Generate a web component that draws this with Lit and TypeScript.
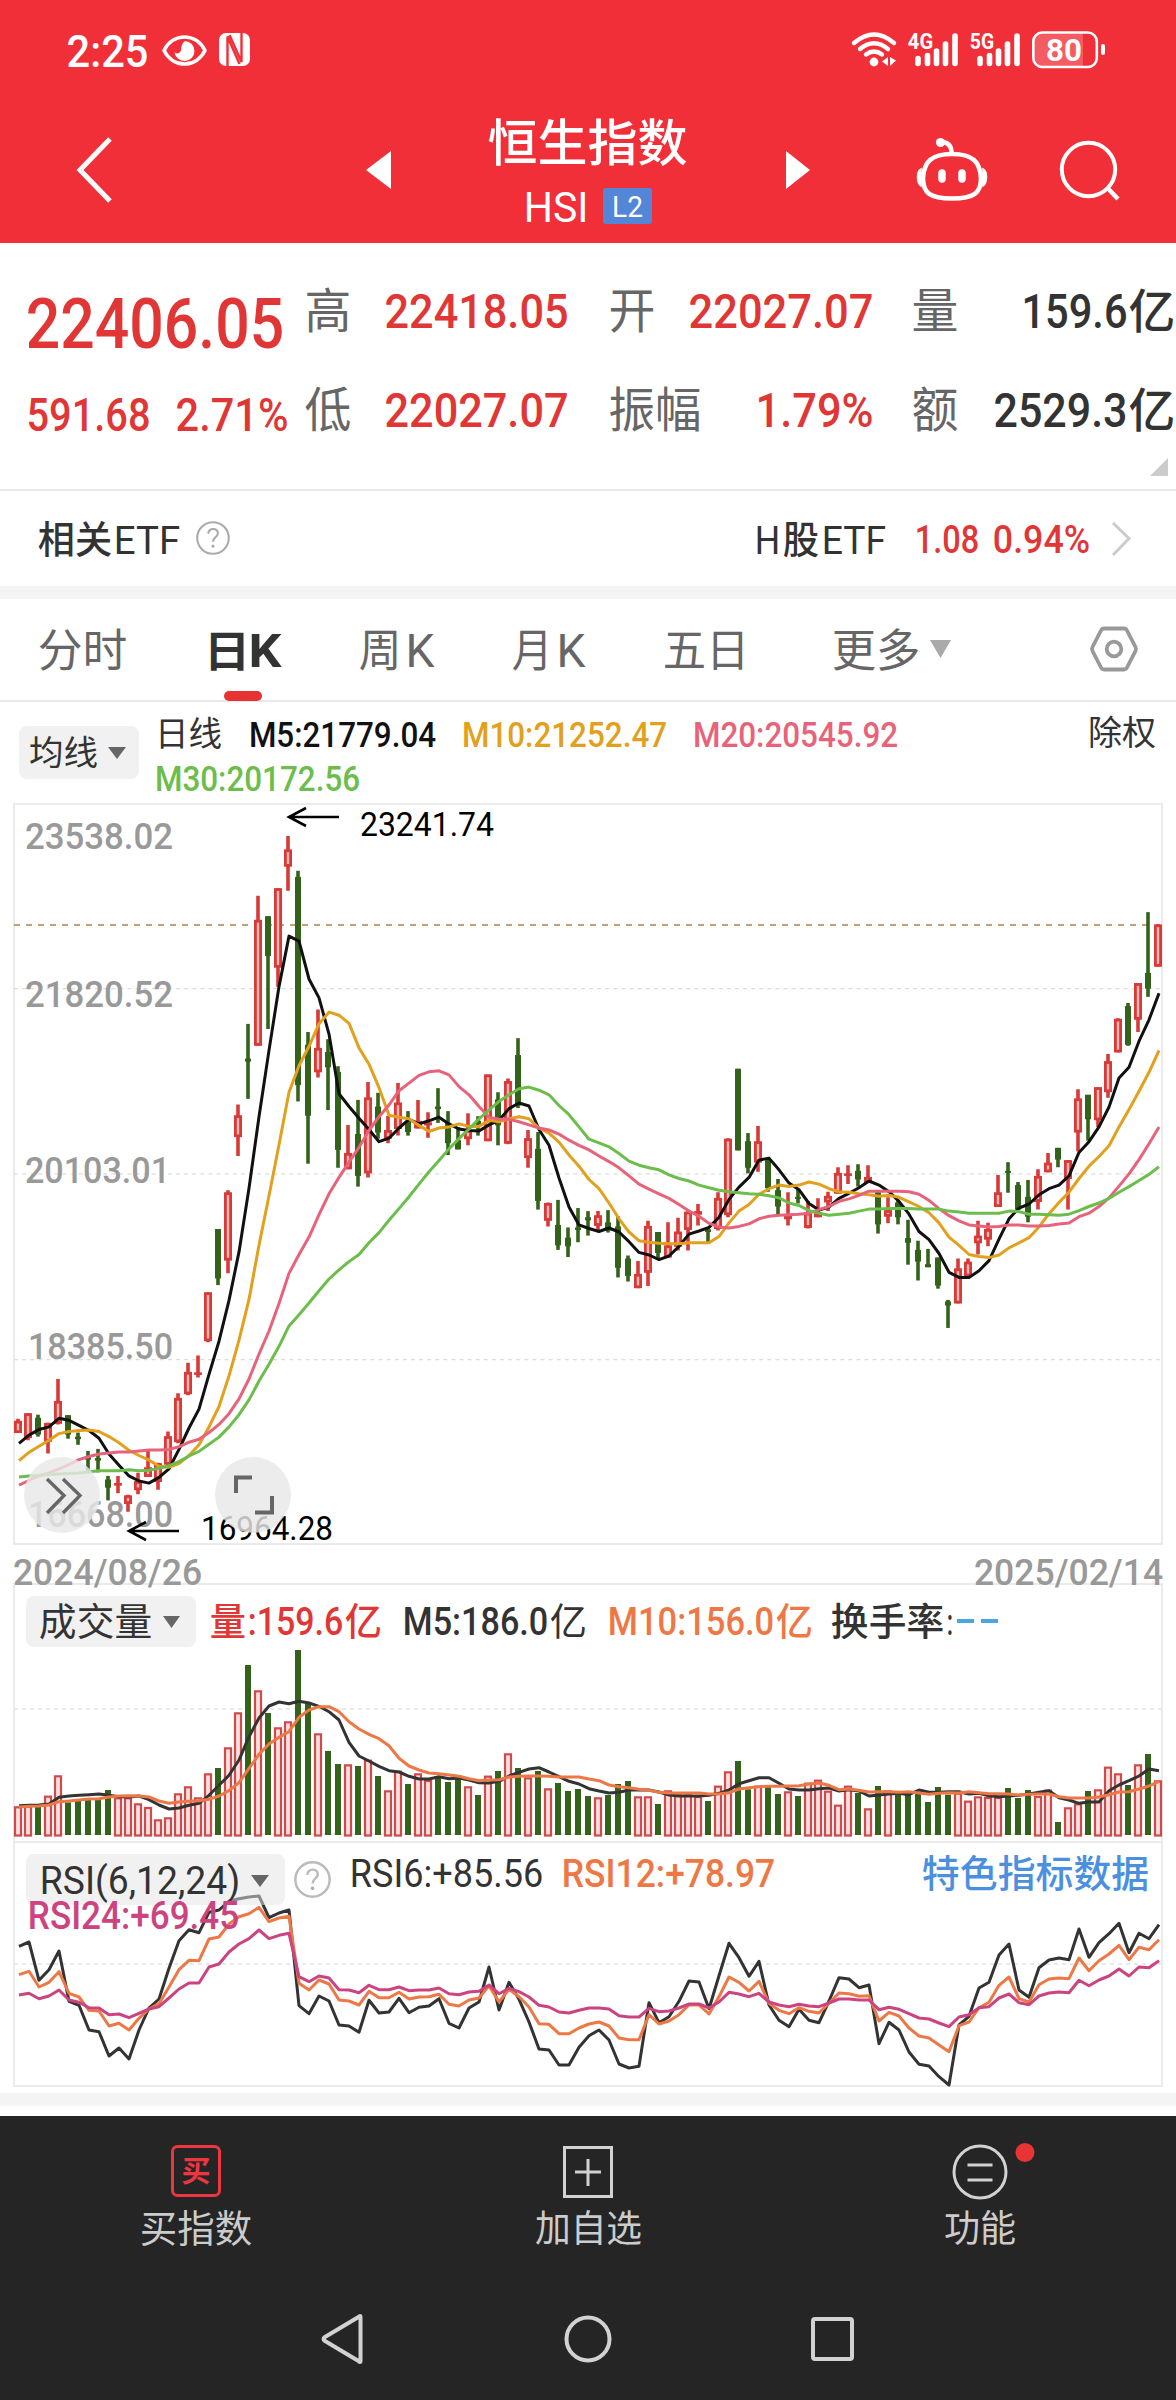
import { LitElement, html, svg, css } from "lit";
import { customElement } from "lit/decorators.js";

const CAP = 0.711;

/* One run of text fitted to an exact ink width; the box is the cap height, so its bottom edge is the baseline. */
const run = (text: string, w: number, size: number, bearing: number, cls: string) => {
  const cap = size * CAP;
  const pad = size * bearing;
  return html`<svg class="run ${cls}" width=${w} height=${cap} font-size=${size}>
    <text x=${-pad} y=${cap} textLength=${w + pad * 2} lengthAdjust="spacingAndGlyphs">${text}</text>
  </svg>`;
};
const num = (text: string, w: number, cap: number, cls = "") => run(text, w, cap / CAP, 0.032, cls);
const cjk = (text: string, w: number, size: number, cls = "") => run(text, w, size, 0.03, cls);

/* Same fitting for labels that live inside a chart. */
const label = (text: string, x: number, y: number, w: number, cap: number, cls: string) => {
  const size = cap / CAP;
  const pad = size * 0.03;
  return svg`<text class=${cls} font-size=${size} x=${x - pad} y=${y} textLength=${w + pad * 2} lengthAdjust="spacingAndGlyphs">${text}</text>`;
};

const caret = (w: number, h: number, cls: string) =>
  html`<svg class="caret ${cls}" width=${w} height=${h} viewBox="0 0 10 10" preserveAspectRatio="none"><path d="M0 0H10L5 10Z" /></svg>`;

const question = (r: number) => html`<svg class="q" width=${r * 2} height=${r * 2} viewBox="-18 -18 36 36">
  <circle r="16.7" /><path d="M-5 -4.5C-5 -11.5 5.5 -11 5.2 -4.8C5 -1 0 -1 0 4" /><circle class="dot" cy="8.6" r="1.7" /></svg>`;

/* color high top bottom low, in half-pixel ticks */
const CANDLES = `r1252 1256 1280 1280|r1241 1241 1290 1294|g1244 1250 1283 1287|r1260 1260 1297 1320|r1174 1217 1262 1263|g1245 1245 1283 1291|g1279 1287 1292 1303|g1315 1328 1332 1355|g1311 1329 1334 1357|g1364 1371 1387 1412|r1364 1378 1383 1398|r1401 1402 1419 1434|r1358 1374 1392 1400|r1314 1347 1366 1366|r1338 1339 1376 1391|r1277 1286 1342 1345|r1202 1211 1298 1300|r1142 1160 1204 1206|r1128 1161 1166 1171|r1004 1004 1100 1102|g880 880 977 990|r804 808 942 967|r636 657 700 737|g478 546 552 625|r227 274 521 521|g267 267 345 488|r212 212 368 405|r110 136 170 217|g178 190 598 630|g494 519 658 752|r450 525 573 583|g508 533 563 647|g561 572 725 760|r676 731 763 763|g627 694 776 797|r592 622 771 779|g613 640 691 703|r658 686 703 712|r594 632 684 697|g649 670 690 697|r627 668 683 683|r651 671 677 701|g604 640 645 672|g649 672 712 735|g680 706 724 724|r653 686 704 716|g659 668 675 697|r577 577 708 708|g612 626 677 716|r585 590 713 714|g506 539 638 643|r686 702 741 760|g690 723 825 842|r828 829 864 875|g823 872 912 921|g877 897 914 935|g839 877 882 906|g845 857 863 893|r845 853 874 882|g843 867 883 887|g855 875 956 975|g932 938 972 983|r943 968 996 996|r864 874 966 992|g886 886 927 938|r867 912 936 937|r858 885 915 922|r845 846 882 922|r831 845 852 873|g877 881 886 906|r808 819 880 883|r702 703 853 857|g566 566 726 726|g692 708 760 771|r678 708 750 768|g740 745 800 807|g782 804 836 851|r808 854 861 873|g802 817 821 830|r825 848 878 879|r820 847 857 857|r807 815 828 845|r759 770 811 811|r755 771 776 792|g753 766 783 797|r755 778 790 790|g808 808 871 889|r818 843 856 869|g824 828 857 871|g862 898 907 950|g903 921 944 981|g919 949 955 955|g936 936 991 997|g1019 1022 1030 1074|r938 957 1026 1026|r938 944 973 973|r864 893 908 930|r868 880 901 914|r774 808 837 837|g749 766 770 809|g788 794 842 842|g784 817 856 867|r763 776 827 842|r731 750 769 769|g721 721 744 759|r745 745 782 842|r606 624 691 728|g617 617 665 707|r602 602 667 680|r537 551 612 623|r467 468 534 534|g437 443 519 521|r398 398 470 494|g259 378 409 425|r282 283 366 366`
  .split("|")
  .map((c) => ({ up: c[0] === "r", v: c.slice(1).split(" ").map(Number) }));

const MA5 = [1300,1284,1273,1268,1251,1255,1265,1275,1290,1321,1343,1364,1374,1378,1367,1350,1312,1270,1233,1165,1100,1020,925,800,660,530,405,306,316,390,427,498,615,640,663,685,709,702,682,665,674,668,661,674,684,687,688,676,667,644,633,639,685,716,780,837,872,879,885,878,886,905,926,931,940,933,914,890,884,877,857,822,798,779,745,741,764,790,803,830,843,837,820,810,799,786,794,807,826,851,885,901,928,965,975,975,962,942,900,860,839,831,813,801,794,776,730,709,680,641,584,563,512,470,418];
const MA10 = [1334,1318,1306,1294,1281,1277,1275,1274,1277,1287,1299,1314,1324,1333,1345,1347,1340,1324,1303,1268,1228,1168,1098,1018,912,815,715,612,560,522,478,455,461,477,525,557,603,657,661,664,677,689,682,680,674,679,679,667,670,664,660,664,682,692,710,735,757,783,801,829,860,886,903,906,908,909,909,907,907,907,895,868,845,832,812,801,794,797,794,788,792,801,807,808,811,813,816,814,818,827,836,848,868,896,912,930,934,936,931,917,907,897,876,850,828,808,781,757,738,717,680,646,610,573,530];
const MA20 = [1382,1373,1364,1358,1350,1342,1332,1326,1321,1319,1317,1317,1315,1313,1313,1312,1307,1298,1292,1279,1263,1242,1213,1174,1125,1080,1026,967,930,896,852,811,779,749,720,687,660,637,609,594,579,572,570,578,601,617,640,661,665,665,670,676,682,686,694,706,716,725,737,748,760,776,792,802,811,820,832,845,855,869,876,878,875,870,860,855,853,852,851,849,842,836,826,821,814,806,806,806,806,807,812,824,840,854,864,872,874,876,875,872,872,874,874,873,870,868,856,849,836,819,796,772,744,713,680];
const MA30 = [1366,1364,1363,1361,1360,1359,1358,1356,1354,1354,1354,1352,1354,1353,1349,1344,1336,1325,1316,1302,1288,1268,1244,1215,1178,1145,1110,1070,1048,1025,1001,978,960,944,930,907,887,863,840,817,792,768,746,723,703,684,664,647,630,617,605,602,608,617,638,656,680,704,711,719,732,747,755,760,764,774,781,786,794,799,804,807,809,811,812,815,819,829,834,844,849,853,851,849,845,841,841,840,840,840,841,841,841,845,847,849,849,849,849,845,846,851,851,852,853,851,844,836,829,820,808,797,785,773,758];

const VOL = [799,797,800,767,706,787,780,777,777,750,772,772,790,801,838,832,760,739,772,700,684,622,517,375,451,519,562,544,330,492,580,633,672,673,678,659,708,751,692,732,700,720,708,726,717,739,765,707,693,640,684,712,693,745,729,753,747,768,772,765,732,723,769,769,792,751,762,762,768,783,737,694,663,748,737,740,762,754,768,728,719,752,794,737,759,805,738,751,764,764,762,786,741,764,758,782,769,771,771,744,774,750,768,749,846,802,790,753,748,680,700,735,673,642,721];
const VOL5 = [797,796,795,792,772,768,766,764,762,766,770,771,768,779,795,807,804,796,790,766,736,706,660,590,534,498,486,491,484,489,499,515,540,607,648,663,679,692,696,709,717,717,710,716,714,720,728,729,724,708,697,687,683,696,710,724,732,746,753,759,757,750,749,750,756,765,768,768,768,766,760,750,731,722,713,713,730,747,750,750,746,744,753,749,753,768,765,762,760,764,750,757,757,755,755,762,760,767,770,768,766,762,757,752,773,780,790,786,786,752,735,722,708,687,692];
const VOL10 = [801,799,798,795,785,783,780,777,776,771,768,767,768,771,783,790,786,784,782,778,768,752,728,685,643,612,592,575,532,510,500,500,515,545,567,583,596,617,655,678,690,699,701,705,709,716,722,720,719,711,709,708,708,709,711,711,711,717,722,735,740,743,748,751,757,759,759,759,759,762,762,758,747,743,740,739,739,738,737,732,729,736,749,747,751,756,755,755,757,755,759,763,760,758,759,755,758,761,761,762,765,763,762,762,770,774,774,774,771,764,756,755,747,738,724];

const RSI6 = [349,336,451,419,363,514,526,600,605,678,654,687,600,534,507,415,332,299,308,247,240,213,206,201,198,263,249,240,527,551,498,513,585,588,607,511,549,546,505,548,532,528,506,580,594,534,516,411,540,457,508,576,657,660,705,705,652,617,600,630,702,714,709,518,578,560,514,453,456,536,437,340,383,439,394,525,571,590,538,571,578,513,443,447,473,465,641,577,600,666,703,708,740,765,585,559,474,457,375,342,480,502,413,390,384,389,297,382,338,311,280,368,310,326,284];
const RSI12 = [434,424,471,457,425,490,501,541,543,588,580,600,565,537,521,471,419,391,392,327,321,282,260,251,232,275,264,259,460,480,450,462,510,513,525,484,503,503,487,507,501,500,493,523,528,510,504,467,516,478,500,531,581,583,611,611,594,582,576,588,624,629,629,554,582,573,554,525,525,552,500,441,457,483,454,520,541,551,533,544,549,519,489,491,499,497,573,547,558,594,618,624,645,665,587,576,533,517,466,441,506,516,464,447,444,446,384,422,392,372,346,389,352,359,329];
const RSI24 = [495,490,506,498,480,510,517,533,534,554,552,563,550,537,530,504,477,459,459,411,402,366,342,326,300,326,316,310,440,455,438,444,479,480,488,466,479,479,471,482,480,480,474,491,494,486,484,465,491,475,485,501,526,531,546,549,541,534,534,537,557,561,561,535,545,543,534,522,522,534,516,487,492,500,490,516,525,530,523,528,530,519,507,507,510,510,539,532,538,551,564,567,579,590,561,554,533,530,504,492,518,524,498,489,486,488,451,467,450,438,417,438,411,413,392];

const px = (i: number) => 18 + i * 10;
const py = (v: number) => 780 + v / 1.96;
const vy = (v: number) => 1540 + v / 3;
const ry = (v: number) => 1830 + v / 3;
const line = (data: number[], y: (v: number) => number, cls: string) =>
  svg`<polyline class="ln ${cls}" points=${data.map((v, i) => `${px(i) + 1},${y(v).toFixed(1)}`).join(" ")} />`;

@customElement("app-root")
export class AppRoot extends LitElement {
  static styles = css`
    :host {
      display: block;
      width: 1176px;
      height: 2400px;
      overflow: hidden;
      background: #fff;
      color: #333;
      font-family: Roboto, "Noto Sans CJK SC", sans-serif;
    }
    svg { display: block; overflow: visible; flex: none; }
    text { fill: currentColor; white-space: pre; }
    .m { font-weight: 500; }
    .b { font-weight: 700; }
    .flex { display: flex; align-items: flex-end; }
    .red { color: #e03636; }
    .gray { color: #666; }
    .light { color: #999; }
    .black { color: #111; }
    .gold { color: #e2a01c; }
    .pink { color: #e8637a; }
    .green { color: #6cbd4c; }
    .orange { color: #ee7845; }
    .magenta { color: #cb4480; }
    .blue { color: #4b90de; }
    .sky { color: #4aa6e2; }
    .caret { fill: #666; }
    .q { fill: none; stroke: #aaa; stroke-width: 2.2; }
    .q .dot { fill: #aaa; stroke: none; }

    .header { height: 243px; background: #f12f38; color: #fff; }
    .status { display: grid; grid-template-columns: 94px 57px 631px auto; align-items: end; height: 66px; padding-left: 68px; }
    .bar { display: grid; grid-template-columns: 290px 123px 197px 124px 177px 132px; align-items: center; box-sizing: border-box; height: 177px; padding: 31px 0 0 76px; }
    .name { display: flex; flex-direction: column; align-items: center; gap: 28px; padding-top: 9px; }
    .code { display: flex; align-items: center; gap: 16px; padding-left: 2px; }
    .badge { display: flex; align-items: center; justify-content: center; width: 49px; height: 36px; border-radius: 3px; background: #5486d8; }

    .stats { position: relative; display: flex; box-sizing: border-box; height: 248px; padding-left: 28px; border-bottom: 2px solid #e8e8e8; }
    .price { width: 278px; }
    .price .p1 { height: 104px; }
    .price .p2 { height: 83px; gap: 28px; }
    .grid { display: grid; grid-template-columns: 80px 181px 43px 80px 182px 41px 80px 181px; grid-template-rows: 85px 99px; align-items: end; align-content: start; }
    .end { justify-self: end; }
    .unit { gap: 4px; }
    .fold { position: absolute; right: 8px; bottom: 13px; }

    .etf { display: grid; grid-template-columns: 157px 560px 160px 195px auto; align-items: end; height: 62px; padding: 0 0 33px 39px; border-bottom: 13px solid #f4f4f4; }
    .g1 { gap: 1px; }
    .g4 { gap: 4px; }
    .g5 { gap: 5px; }
    .g7 { gap: 7px; }
    .g16 { gap: 16px; }
    .etf .q { margin-bottom: -2px; }
    .etf .go { margin-bottom: -3px; }

    .tabs { display: grid; grid-template-columns: 166px 155px 153px 151px 169px 257px auto; align-items: end; height: 68px; padding: 0 0 33px 39px; border-bottom: 2px solid #e8e8e8; }
    .tab { position: relative; color: #666; }
    .tab.on { color: #333; }
    .tab.on::after { content: ""; position: absolute; left: 19px; bottom: -34px; width: 38px; height: 10px; border-radius: 5px; background: #e63232; }
    .more { gap: 11px; }
    .more .caret { fill: #aaa; margin-bottom: 9px; }
    .hex { margin-bottom: -5px; }

    .legend { display: flex; box-sizing: border-box; height: 102px; padding-left: 19px; }
    .pill { display: flex; align-items: center; box-sizing: border-box; border-radius: 8px; background: rgba(228, 228, 228, 0.5); }
    .avg { width: 120px; height: 53px; margin: 24px 17px 0 0; padding: 1px 13px 0 11px; justify-content: space-between; }
    .values { width: 933px; }
    .values .v1 { display: grid; grid-template-columns: 94px 213px 231px auto; align-items: end; height: 44px; }
    .values .v2 { height: 44px; }
    .right { height: 43px; }

    .kline { position: relative; z-index: 1; }
    .panel { position: relative; }
    .head { position: absolute; left: 0; top: 0; width: 1176px; }
    .frame { fill: none; stroke: #ebebeb; stroke-width: 2; }
    .tick { stroke: #dcdcdc; stroke-width: 1.2; stroke-dasharray: 4 4.1; }
    .dots { stroke: #e8e8e8; stroke-width: 2; stroke-dasharray: 4 4; }
    .now { stroke: #c2a274; stroke-width: 2; stroke-dasharray: 6 6; }
    .up { stroke: #d83a38; fill: #fbb8b6; }
    .dn { stroke: #33621a; fill: #33621a; }
    .wick { stroke-width: 3.6; }
    .vup { stroke: #cf4a4b; fill: #fbe0e0; stroke-width: 2.2; }
    .ln { fill: none; stroke: currentColor; stroke-width: 3; stroke-linejoin: round; }
    .ink { stroke: #000; fill: none; stroke-width: 2.6; }
    .jet { color: #000; }
    .fab { fill: #e8e8e8; fill-opacity: 0.82; }
    .glyph { fill: none; stroke: #666; stroke-width: 4; }
    .glyph.thin { stroke-width: 3.4; }

    .vol { display: flex; align-items: flex-end; height: 51px; }
    .vol .pill { width: 170px; height: 51px; margin: 0 15px -12px 26px; padding: 1px 16px 0 14px; justify-content: space-between; }
    .vol .seg { display: flex; align-items: flex-end; }
    .vol .s1 { width: 193px; }
    .vol .s2 { width: 205px; }
    .vol .s3 { width: 223px; }
    .dash { margin-bottom: 12px; }
    .rsi { display: grid; grid-template-columns: 325px 212px 360px auto; align-items: end; height: 45px; padding-left: 26px; }
    .rsi .pick { display: flex; align-items: flex-end; gap: 9px; margin-bottom: -18px; }
    .rsi .pill { width: 259px; height: 51px; padding: 2px 16px 0 15px; justify-content: space-between; }
    .rsi .q { margin-bottom: 7px; stroke-width: 2.4; stroke: #bbb; }
    .sub { height: 42px; padding-left: 29px; }

    .band { height: 13px; background: #f4f4f4; border-bottom: 10px solid #fff; }
    .dock { height: 284px; background: #252525; color: #ccc; }
    .acts { display: grid; grid-template-columns: repeat(3, 392px); height: 126px; align-items: end; justify-items: center; }
    .act { display: flex; flex-direction: column; align-items: center; gap: 18px; }
    .line { fill: none; stroke: #d2d2d2; stroke-width: 3; }
    .sys { display: grid; grid-template-columns: 244px 246px 42px; justify-content: start; align-items: center; padding: 72px 0 0 321px; }
    .sys .line { stroke-width: 4; stroke-linejoin: round; }
    .buy { fill: none; stroke: #ec3640; stroke-width: 3; }
    .buytext { color: #ec3640; font-weight: 700; font-size: 29px; }
  `;

  private header() {
    return html`<header class="header">
      <div class="status">
        ${num("2:25", 79, 31.5, "m")}
        <svg width="45" height="31" viewBox="0 0 45 31">
          <path d="M2 15.5C11 -2.5 34 -2.5 43 15.5C34 33.5 11 33.5 2 15.5Z" fill="none" stroke="#fff" stroke-width="3.6" stroke-linejoin="round" />
          <path d="M23 6A10 10 0 1 1 12.5 17C13 18 15 19 17 18C21 16 17 11 23 6Z" fill="#fff" />
        </svg>
        <svg width="31" height="33" viewBox="0 0 31 33">
          <rect width="31" height="33" rx="7" fill="#fff" />
          <path d="M8.5 33V3.5L20.5 31M10.5 2L22.5 29V0" fill="none" stroke="#f12f38" stroke-width="2.4" />
        </svg>
        <svg width="256" height="36" viewBox="850 30 256 36">
          <g fill="none" stroke="#fff" stroke-width="4.4" stroke-linecap="round">
            <path d="M854 43Q874 26 894 43" /><path d="M860 49Q874 37.5 888 49" /><path d="M866 54.5Q874 48.5 882 54.5" />
          </g>
          <circle cx="874" cy="62" r="4.4" fill="#fff" />
          <path d="M882 61.5L888 57V66ZM890 57V66L896 60.5Z" fill="#fff" />
          ${label("4G", 908.5, 49, 24, 15.5, "b")}
          ${label("5G", 970.5, 49, 23, 15.5, "b")}
          <g stroke="#fff" stroke-width="5.6" stroke-linecap="round">
            <path d="M918 58.5V63.5M927.5 55.5V63.5M936.5 51V63.5M945.5 44V63.5M955 36V63.5" />
            <path d="M980 58.5V63.5M989.5 55.5V63.5M998.5 51V63.5M1007.5 44V63.5M1017 36V63.5" />
          </g>
          <path d="M1083 33.5H1042Q1034 33.5 1034 41.5V58.5Q1034 66.5 1042 66.5H1083Z" fill="#fff" fill-opacity="0.22" />
          <rect x="1033.3" y="32.5" width="63.5" height="34.5" rx="9" fill="none" stroke="#fff" stroke-width="2.6" />
          <rect x="1101" y="44" width="4" height="11" rx="2" fill="#fff" />
          ${label("80", 1047, 61, 34, 22.5, "b")}
        </svg>
      </div>
      <div class="bar">
        <svg width="36" height="64" viewBox="0 0 36 64"><path d="M34 1L4 32L34 63" fill="none" stroke="#fff" stroke-width="5" /></svg>
        <svg width="25" height="38" viewBox="0 0 25 38"><path d="M0 19L25 0V38Z" fill="#fff" /></svg>
        <div class="name">
          ${cjk("恒生指数", 197, 50, "m")}
          <div class="code">${num("HSI", 62, 30.5)}<span class="badge">${num("L2", 29, 21)}</span></div>
        </div>
        <svg class="end" width="24" height="38" viewBox="0 0 24 38"><path d="M24 19L0 0V38Z" fill="#fff" /></svg>
        <svg class="end" width="70" height="64" viewBox="917 138 70 64">
          <path d="M952 154C973 154 980 162 981 178C981 193 974 198.5 952 198.5C930 198.5 923 193 923 178C924 162 931 154 952 154Z" fill="none" stroke="#fff" stroke-width="4.6" />
          <path d="M921 169Q917.5 171 917.5 177Q917.5 184 921 186ZM983 169Q986.5 171 986.5 177Q986.5 184 983 186Z" fill="#fff" stroke="#fff" stroke-width="1.5" />
          <path d="M941 142Q951 142 951.5 152" fill="none" stroke="#fff" stroke-width="4.5" />
          <circle cx="940.5" cy="142.5" r="4.6" fill="#fff" />
          <path d="M942 173V179M962 173V179" stroke="#fff" stroke-width="7.5" stroke-linecap="round" />
        </svg>
        <svg class="end" width="60" height="60" viewBox="1059 140 60 60">
          <circle cx="1088.5" cy="169.5" r="26.7" fill="none" stroke="#fff" stroke-width="4" />
          <path d="M1107 187.5L1118 199" stroke="#fff" stroke-width="4.5" />
        </svg>
      </div>
    </header>`;
  }

  private stats() {
    return html`<section class="stats">
      <div class="price">
        <div class="flex p1">${num("22406.05", 254, 49.5, "m red")}</div>
        <div class="flex p2">${num("591.68", 121, 32.5, "m red")}${num("2.71%", 110, 32.5, "m red")}</div>
      </div>
      <div class="grid">
        ${cjk("高", 44, 48, "gray")}${num("22418.05", 181, 34, "m red")}<i></i>
        ${cjk("开", 44, 48, "gray")}${num("22027.07", 182, 34, "m red")}<i></i>
        ${cjk("量", 44, 48, "gray")}<div class="flex unit end">${num("159.6", 103, 34, "m")}${cjk("亿", 44, 47, "m")}</div>
        ${cjk("低", 44, 48, "gray")}${num("22027.07", 181, 34, "m red")}<i></i>
        ${cjk("振幅", 90, 48, "gray")}${num("1.79%", 115, 34, "m red end")}<i></i>
        ${cjk("额", 44, 48, "gray")}<div class="flex unit end">${num("2529.3", 131, 34, "m")}${cjk("亿", 44, 47, "m")}</div>
      </div>
      <svg class="fold" width="18" height="18"><path d="M18 0V18H0Z" fill="#ccc" /></svg>
    </section>`;
  }

  private etf() {
    return html`<section class="etf">
      <div class="flex g4">${cjk("相关", 72, 38, "m")}${num("ETF", 64, 27.5)}</div>
      ${question(17)}
      <div class="flex g5">${num("H", 23, 27.5)}${cjk("股", 34, 38, "m")}${num("ETF", 62, 27.5)}</div>
      <div class="flex g16">${num("1.08", 62, 27, "m red")}${num("0.94%", 95, 27, "m red")}</div>
      <svg class="go" width="20" height="34"><path d="M2 1L18 16.5L2 33" fill="none" stroke="#ccc" stroke-width="3" /></svg>
    </section>`;
  }

  private tabs() {
    return html`<nav class="tabs">
      <div class="tab">${cjk("分时", 87, 45)}</div>
      <div class="tab on flex g1">${cjk("日", 44, 43, "b")}${num("K", 30, 33, "b")}</div>
      <div class="tab flex g7">${cjk("周", 40, 45)}${num("K", 26, 33)}</div>
      <div class="tab flex g7">${cjk("月", 38, 45)}${num("K", 26, 33)}</div>
      <div class="tab">${cjk("五日", 84, 45)}</div>
      <div class="tab flex more">${cjk("更多", 86, 45)}${caret(21, 18, "")}</div>
      <svg class="hex" width="48" height="46" viewBox="0 0 48 46" fill="none" stroke="#999" stroke-width="3.8">
        <path d="M14 2.5H34Q36 2.5 37 4.5L45.5 21Q46.5 23 45.5 25L37 41.5Q36 43.5 34 43.5H14Q12 43.5 11 41.5L2.5 25Q1.5 23 2.5 21L11 4.5Q12 2.5 14 2.5Z" />
        <circle cx="24" cy="23" r="7.3" />
      </svg>
    </nav>`;
  }

  private legend() {
    return html`<section class="legend">
      <div class="pill avg">${cjk("均线", 67, 34)}${caret(18, 12, "")}</div>
      <div class="values">
        <div class="v1">${cjk("日线", 65, 34)}${num("M5:21779.04", 185, 24.5, "m black")}${num("M10:21252.47", 203, 24.5, "m gold")}${num("M20:20545.92", 203, 24.5, "m pink")}</div>
        <div class="flex v2">${num("M30:20172.56", 203, 24.5, "m green")}</div>
      </div>
      <div class="flex right">${cjk("除权", 66, 34)}</div>
    </section>`;
  }

  private candle(c: { up: boolean; v: number[] }, i: number) {
    const [h, t, b, l] = c.v.map(py);
    const x = px(i);
    const thick = b - t;
    if (c.up) {
      const s = thick < 4 ? 2 : 2.8;
      return svg`<g class="up"><path class="wick" d=${`M${x} ${h}V${t + 1}M${x} ${b - 1}V${l}`} />
        <rect x=${x - 4 + s / 2} y=${t + s / 2} width=${8 - s} height=${Math.max(thick - s, 0.5)} stroke-width=${s} /></g>`;
    }
    return svg`<g class="dn"><path class="wick" d=${`M${x} ${h}V${l}`} /><rect x=${x - 3} y=${t} width="6" height=${thick} stroke="none" /></g>`;
  }

  private kline() {
    return html`<svg class="kline" width="1176" height="780" viewBox="0 804 1176 780">
      <rect class="frame" x="14" y="804" width="1148" height="740" />
      ${[409, 772, 1136].map((v) => svg`<path class="tick" d=${`M14 ${py(v)}H1162`} />`)}
      <path class="now" d="M14 925H1152" />
      ${label("23538.02", 26, 849, 146, 26.5, "light m")}
      ${label("21820.52", 26, 1007, 146, 26.5, "light m")}
      ${label("20103.01", 26, 1183, 143, 26.5, "light m")}
      ${label("18385.50", 29, 1358.5, 143, 26.5, "light m")}
      ${label("16668.00", 29, 1526.5, 143, 26.5, "light m")}
      ${CANDLES.map((c, i) => this.candle(c, i))}
      ${line(MA5, py, "black")}${line(MA10, py, "gold")}${line(MA20, py, "pink")}${line(MA30, py, "green")}
      <path class="ink" d="M306 808L289 817L306 826M289 817H339" />
      ${label("23241.74", 361, 836, 132, 23.5, "jet")}
      <path class="ink" d="M146 1522L129 1531L146 1540M129 1531H179" />
      ${label("16964.28", 202, 1540, 130, 23.5, "jet")}
      <circle class="fab" cx="62" cy="1495" r="38" />
      <circle class="fab" cx="253" cy="1495" r="38" />
      <path class="glyph thin" d="M47 1479L64 1495.5L47 1513M63 1479L80 1495.5L63 1513" />
      <path class="glyph" d="M236 1493V1477.5H252M272 1496V1512.5H255" />
      ${label("2024/08/26", 14, 1585, 187, 26, "light m")}
      ${label("2025/02/14", 975, 1585, 187, 26, "light m")}
    </svg>`;
  }

  private volume() {
    return html`<div class="panel">
      <svg width="1176" height="258" viewBox="0 1584 1176 258">
        <path class="frame" d="M14 1842V1584H1162V1842" />
        <path class="dots" d="M14 1709H1162" /><path class="frame" d="M14 1834H1162" />
        ${VOL.map((v, i) =>
          CANDLES[i].up
            ? svg`<rect class="vup" x=${px(i) - 3} y=${vy(v) + 1} width="6" height=${1834.5 - vy(v)} />`
            : svg`<rect class="dn" x=${px(i) - 3} y=${vy(v)} width="6" height=${1835 - vy(v)} stroke-width="0" />`
        )}
        ${line(VOL5, vy, "")}${line(VOL10, vy, "orange")}
      </svg>
      <div class="head vol">
        <div class="pill">${cjk("成交量", 111, 38)}${caret(17, 12, "")}</div>
        <div class="seg s1 red g4">${cjk("量", 34, 38, "m")}${num(":159.6", 93, 27, "m")}${cjk("亿", 35, 38, "m")}</div>
        <div class="seg s2 g4">${num("M5:186.0", 143, 27, "m")}${cjk("亿", 35, 38)}</div>
        <div class="seg s3 orange g4">${num("M10:156.0", 164, 27, "m")}${cjk("亿", 35, 38, "m")}</div>
        <div class="seg g5">${cjk("换手率", 111, 38, "m")}${num(":", 4, 26, "m")}
          <span class="dash sky"><svg width="41" height="4"><path d="M0 2H17M24 2H41" stroke="currentColor" stroke-width="4" /></svg></span></div>
      </div>
    </div>`;
  }

  private rsi() {
    return html`<div class="panel">
      <svg width="1176" height="251" viewBox="0 1842 1176 251">
        <rect class="frame" x="14" y="1842" width="1148" height="244" />
        <path class="dots" d="M14 1964H1162" />
        ${line(RSI6, ry, "")}${line(RSI12, ry, "orange")}${line(RSI24, ry, "magenta")}
      </svg>
      <div class="head">
        <div class="rsi">
          <div class="pick"><div class="pill">${num("RSI(6,12,24)", 198, 27)}${caret(18, 12, "")}</div>${question(18.5)}</div>
          ${num("RSI6:+85.56", 191, 27)}
          ${num("RSI12:+78.97", 211, 27, "m orange")}
          ${cjk("特色指标数据", 225, 38, "m blue")}
        </div>
        <div class="flex sub">${num("RSI24:+69.45", 209, 27, "m magenta")}</div>
      </div>
    </div>`;
  }

  private dock() {
    return html`<footer class="dock">
      <div class="acts">
        <div class="act">
          <svg width="50" height="52" viewBox="171 2145 50 52"><rect class="buy" x="172.5" y="2146.5" width="47" height="49" rx="5" />
            <text class="buytext" x="181.5" y="2182">买</text></svg>
          ${cjk("买指数", 110, 38)}
        </div>
        <div class="act">
          <svg width="50" height="52"><path class="line" d="M1.5 1.5H48.5V50.5H1.5ZM12 26H38M25 13V40" /></svg>
          ${cjk("加自选", 105, 37)}
        </div>
        <div class="act">
          <svg width="50" height="52" viewBox="954.5 2144 50 52"><circle class="line" cx="979.5" cy="2170" r="26" />
            <path class="line" d="M967 2163H992M967 2178H992" /><circle cx="1024.5" cy="2150.5" r="9.5" fill="#e83434" /></svg>
          ${cjk("功能", 70, 37)}
        </div>
      </div>
      <div class="sys">
        <svg width="42" height="50"><path class="line" d="M39.5 3V47Q39.5 49 37.5 47L4 27Q1 25 4 23L37.5 3Q39.5 1 39.5 3Z" /></svg>
        <svg width="46" height="46"><circle class="line" cx="23" cy="23" r="21.5" /></svg>
        <svg width="43" height="44"><rect class="line" x="2" y="2" width="39" height="40" rx="2" /></svg>
      </div>
    </footer>`;
  }

  render() {
    return html`${this.header()}${this.stats()}${this.etf()}${this.tabs()}${this.legend()}${this.kline()}${this.volume()}${this.rsi()}
      <div class="band"></div>
      ${this.dock()}`;
  }
}
